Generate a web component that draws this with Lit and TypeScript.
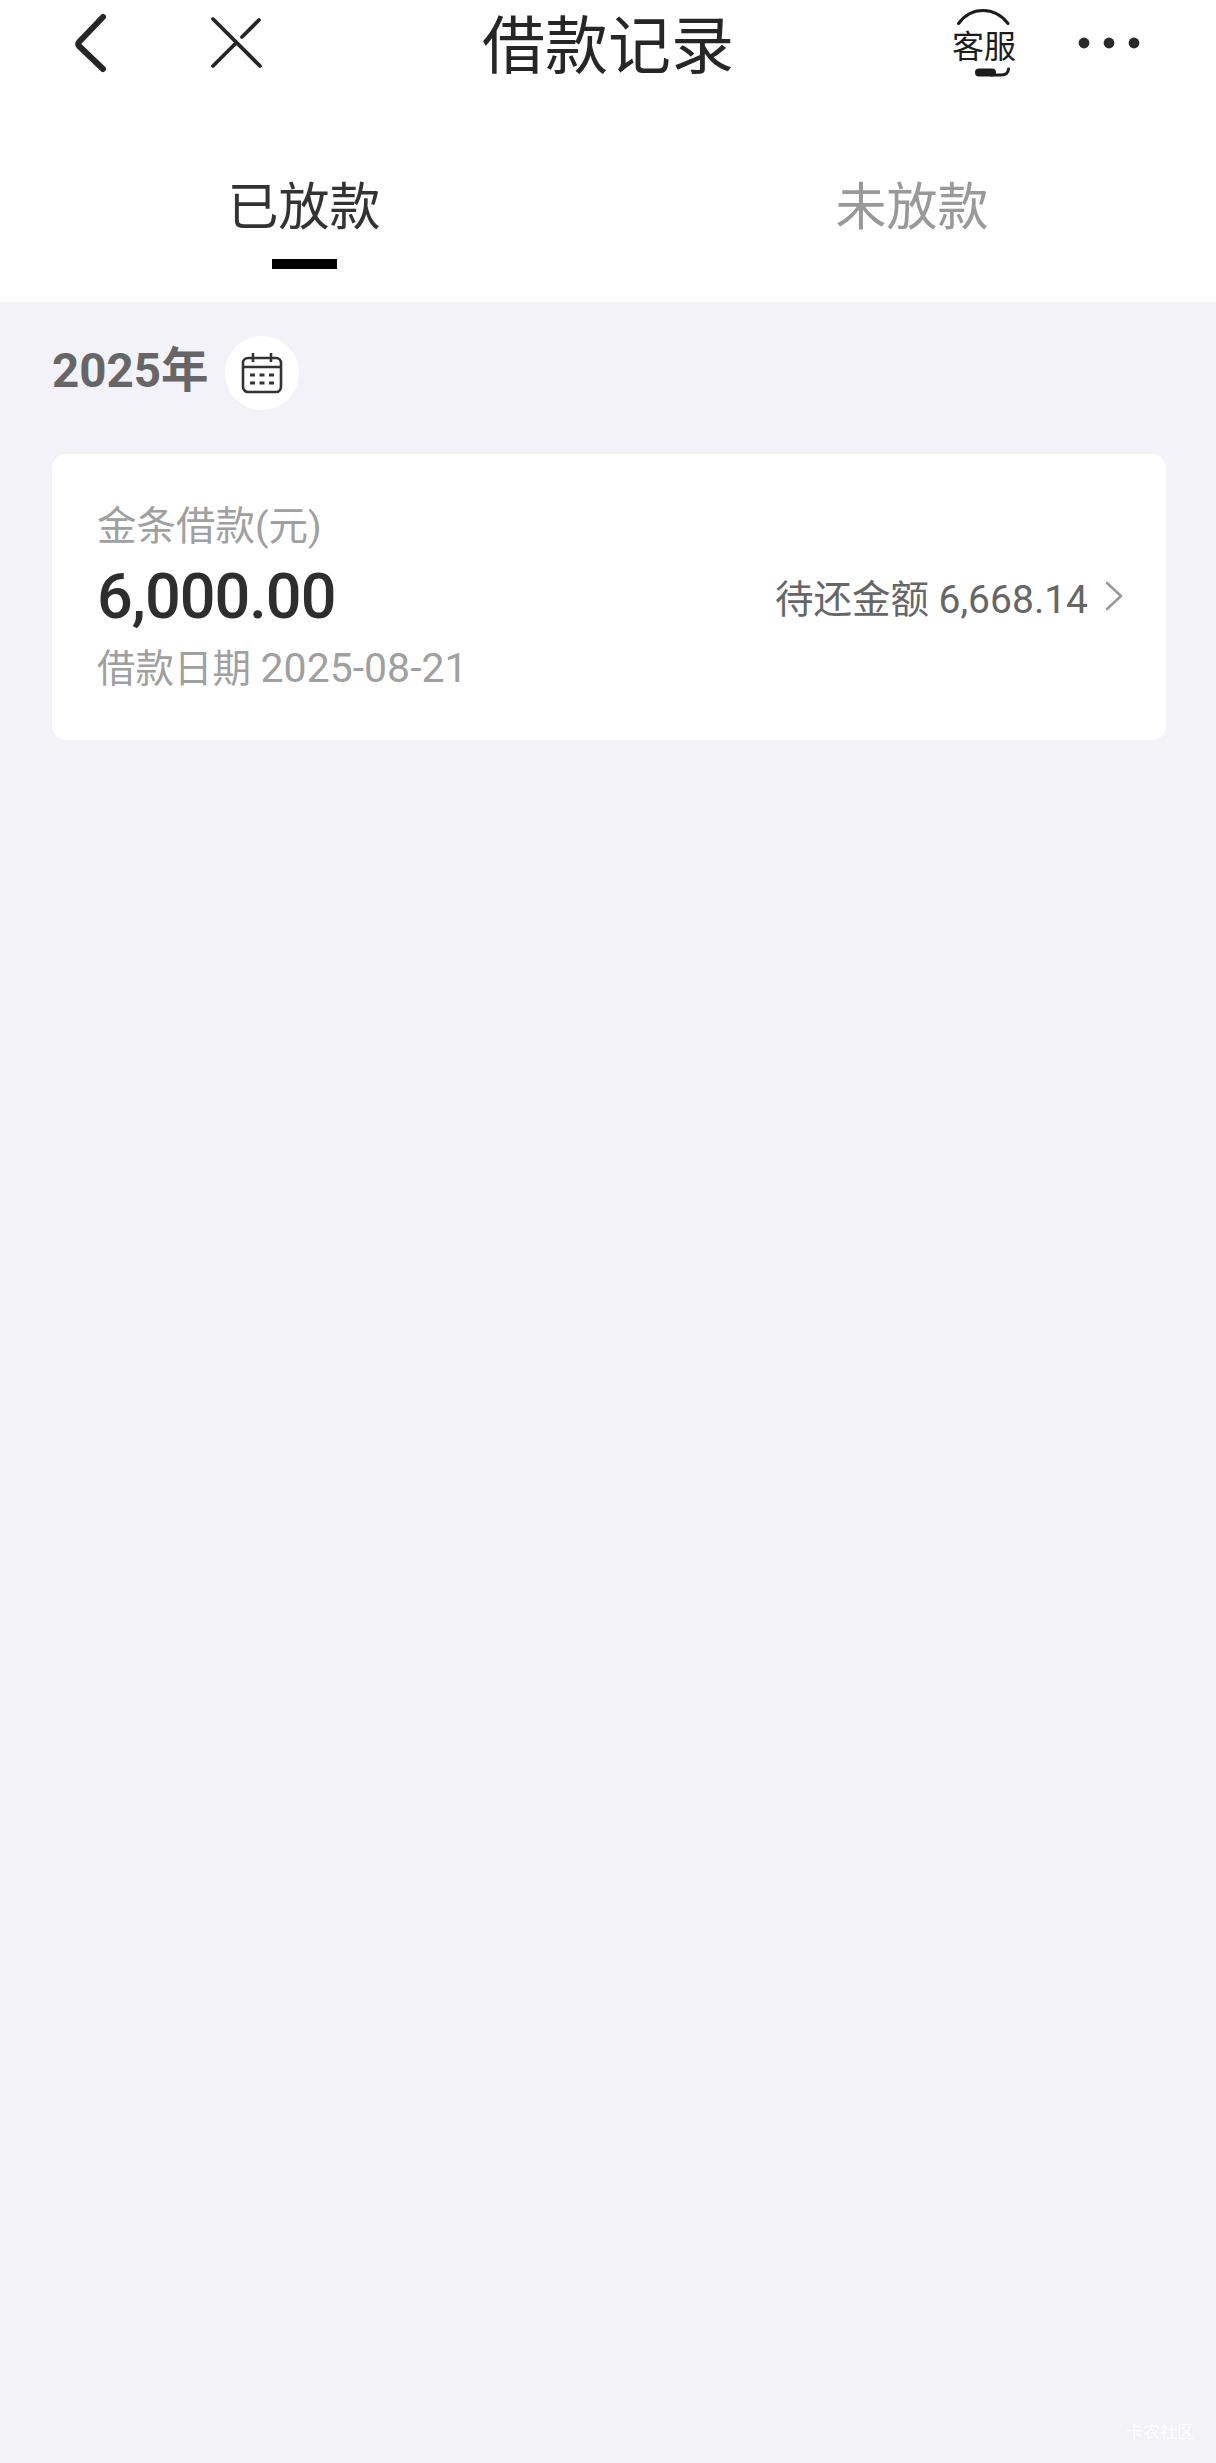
import { LitElement, html, css } from "lit";
import { customElement } from "lit/decorators.js";

@customElement("app-root")
export class AppRoot extends LitElement {
  static styles = css`
    :host {
      display: block;
      width: 1216px;
      height: 2463px;
      position: relative;
      overflow: hidden;
      background: #f2f2f8;
      font-family: Roboto, "Noto Sans CJK SC", sans-serif;
    }
    .head { background: #fff; height: 302px; display: flex; flex-direction: column; }
    .nav {
      height: 86px;
      display: grid;
      grid-template-columns: 1fr auto 1fr;
      align-items: center;
    }
    .left { display: flex; align-items: center; gap: 102px; padding-left: 74px; }
    .left svg, .right svg { display: block; }
    .title { font-size: 63px; line-height: 86px; color: #262626; padding-top: 4px; height: 82px; }
    .right { display: flex; align-items: center; justify-content: flex-end; padding-right: 76px; gap: 61px; }
    .service { position: relative; width: 66px; height: 86px; display: flex; align-items: center; justify-content: center; }
    .service span { font-size: 32px; line-height: 36px; color: #1c1c1c; white-space: nowrap; padding-top: 7px; }
    .service svg { position: absolute; left: 0; top: 0; }
    .tabs { display: grid; grid-template-columns: 1fr 1fr; padding-top: 86px; }
    .tab { display: flex; flex-direction: column; align-items: center; font-size: 51px; line-height: 72px; color: #999; }
    .tab.on { color: #333; }
    .bar { width: 65px; height: 10px; background: #000; margin-top: 15px; }
    .year { display: flex; align-items: center; height: 74px; margin: 34px 0 0 52px; gap: 16px; }
    .year b { font-size: 47.5px; font-weight: 700; color: #666; line-height: 70px; height: 74px; }
    .circle { width: 74px; height: 74px; border-radius: 50%; background: #fff; display: flex; align-items: center; justify-content: center; }
    .card {
      margin: 44px 50px 0 52px;
      height: 286px;
      box-sizing: border-box;
      background: #fff;
      border-radius: 14px;
      padding: 0 43px 2px 45px;
      display: flex;
      justify-content: space-between;
      align-items: center;
    }
    .info { display: grid; grid-auto-rows: 70px; align-items: center; }
    .label { font-size: 39.5px; color: #a0a0a0; margin-bottom: 8px; }
    .amt { font-size: 63px; font-weight: 500; color: #2e2e2e; letter-spacing: -1px; }
    .date { font-size: 38.5px; color: #a0a0a0; margin-bottom: 3px; }
    .date .num { font-size: 41px; }
    .due { display: flex; align-items: center; gap: 17px; font-size: 38.5px; color: #666; }
    .due .num { font-size: 39px; }
    .mark { position: absolute; right: 22px; bottom: 21px; font-size: 17px; line-height: 20px; color: #fff; }
  `;

  render() {
    return html`
      <div class="head">
        <div class="nav">
          <div class="left">
            <svg width="34" height="60" viewBox="0 0 34 60" fill="none" stroke="#262626" stroke-width="6" stroke-linecap="round" stroke-linejoin="round"><path d="M29 4 L5 29 Q3.5 31 5 33 L29 56"/></svg>
            <svg width="54" height="54" viewBox="0 0 54 54" fill="none" stroke="#262626" stroke-width="3.8" stroke-linecap="round"><path d="M3 3 L50 50 M3 50 L25 28 M32 21 L49 4"/></svg>
          </div>
          <div class="title">借款记录</div>
          <div class="right">
            <div class="service">
              <svg width="66" height="86" viewBox="0 0 66 86" fill="none" stroke="#1c1c1c" stroke-linecap="round"><path d="M7.5 23.5 Q17 10.5 32 10.5 Q47 10.5 57 23.5" stroke-width="3"/><path d="M40 75 H50 Q57 75 57.5 69" stroke-width="3"/><path d="M28 72.5 H41" stroke-width="8"/></svg>
              <span>客服</span>
            </div>
            <svg width="62" height="14" viewBox="0 0 62 14" fill="#2a2a2a"><circle cx="6" cy="7" r="5.4"/><circle cx="31" cy="7" r="5.4"/><circle cx="56" cy="7" r="5.4"/></svg>
          </div>
        </div>
        <div class="tabs">
          <div class="tab on">已放款<div class="bar"></div></div>
          <div class="tab">未放款</div>
        </div>
      </div>
      <div class="year">
        <b>2025年</b>
        <div class="circle">
          <svg width="42" height="42" viewBox="0 0 42 42" fill="none" stroke="#333" stroke-width="2.6"><rect x="2" y="6" width="38" height="34" rx="5"/><path d="M2 15 H40 M12 1 V10 M30 1 V10"/><path d="M9 23 H14 M18.5 23 H23.5 M28 23 H33 M9 31 H14 M18.5 31 H23.5 M28 31 H33" stroke-width="3"/></svg>
        </div>
      </div>
      <div class="card">
        <div class="info">
          <div class="label">金条借款(元)</div>
          <div class="amt">6,000.00</div>
          <div class="date">借款日期 <span class="num">2025-08-21</span></div>
        </div>
        <div class="due">
          <span>待还金额 <span class="num">6,668.14</span></span>
          <svg width="18" height="30" viewBox="0 0 18 30" fill="none" stroke="#999" stroke-width="2.6" stroke-linecap="round" stroke-linejoin="round"><path d="M2 2 L16 15 L2 28"/></svg>
        </div>
      </div>
      <div class="mark">卡农社区</div>
    `;
  }
}
